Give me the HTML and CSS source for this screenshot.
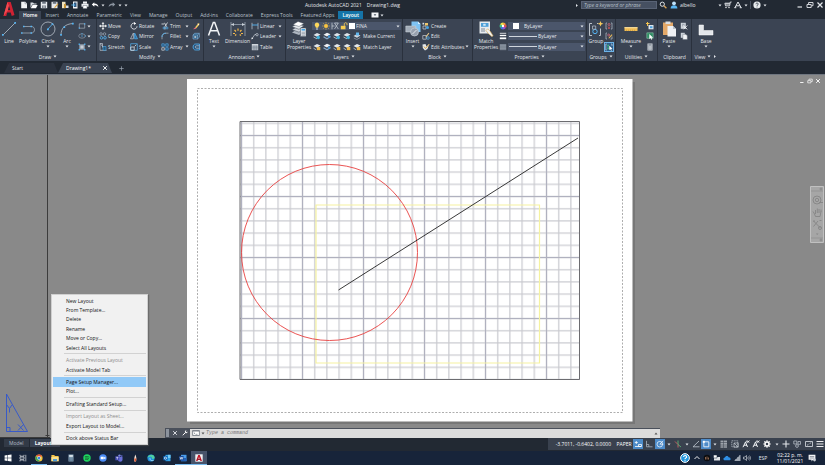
FILE: index.html
```html
<!DOCTYPE html>
<html lang="en">
<head>
<meta charset="utf-8">
<title>Autodesk AutoCAD 2021 - Drawing1.dwg</title>
<link rel="stylesheet" href="styles.css">
</head>
<body>
<svg class="defs" aria-hidden="true">
  <!-- generic -->
  <symbol id="caret" viewBox="0 0 4 3"><path d="M.5.5h3L2 2.400z" fill="currentColor"/></symbol>
  <symbol id="new" viewBox="0 0 8 8"><path d="M1.200.8h4L7 2.500v4.700H1.200z" fill="#f2f4f6"/><path d="M5 .8v2h2" fill="none" stroke="#89919c" stroke-width=".6"/></symbol>
  <symbol id="open" viewBox="0 0 8 8"><path d="M.5 1.500h2.500l1 1h2.500v1H2.200L.5 7z" fill="#d9dde2"/><path d="M2.500 4h5.200L6 7.200H.8z" fill="#fff"/></symbol>
  <symbol id="save" viewBox="0 0 8 8"><path d="M.8.8h6.400v6.400H.8z" fill="#e6e9ed"/><path d="M2.200.8h3.600v2H2.200zM2 4.500h4v2.700H2z" fill="#6b7480"/><path d="M2.700 5.200h2.600M2.700 6.300h2.600" stroke="#fff" stroke-width=".5"/></symbol>
  <symbol id="saveas" viewBox="0 0 8 8"><path d="M.5.8h6v6.400h-6z" fill="#e6e9ed"/><path d="M1.800.8h3.500v2H1.800z" fill="#6b7480"/><path d="M7.500 3 4.300 6.700l-1 .4.200-1.100L6.600 2.400z" fill="#e0a63e"/></symbol>
  <symbol id="openweb" viewBox="0 0 8 8"><path d="M1 .8h3.500v6.400H1z" fill="#f1e3bd"/><path d="M3 3h2v4H3z" fill="#c99739"/><path d="M5 4.500h2.500V7H5z" fill="#dde2e8"/></symbol>
  <symbol id="saveweb" viewBox="0 0 8 8"><path d="M2 .5h4.500v7H2z" fill="#f4f5f7"/><path d="M3 1.500h2.500v4.500H3z" fill="#31577d"/><path d="M.3 4h3M2.200 2.700 3.700 4 2.200 5.300" fill="none" stroke="#57b3ee" stroke-width=".9"/></symbol>
  <symbol id="print" viewBox="0 0 8 8"><path d="M2 .5h4v2H2zM.5 2.800h7v3h-7z" fill="#eef0f3"/><path d="M2 4.500h4v3H2z" fill="#fff" stroke="#69727e" stroke-width=".5"/></symbol>
  <symbol id="undo" viewBox="0 0 8 8"><path d="M3.300 1.200.8 3.500l2.500 2.300V4.300c2 0 3.200.4 4 2 0-2.500-1.300-3.600-4-3.700z" fill="#fff"/></symbol>
  <symbol id="redo" viewBox="0 0 8 8"><path d="M4.700 1.200 7.200 3.500 4.700 5.800V4.300c-2 0-3.200.4-4 2 0-2.500 1.300-3.600 4-3.700z" fill="#8b94a0"/></symbol>
  <symbol id="search" viewBox="0 0 8 8"><circle cx="3.300" cy="3.200" r="2.100" fill="none" stroke="#dfe3e8"/><path d="m4.900 4.800 2.500 2.500" stroke="#d8a35a" stroke-width="1.300"/></symbol>
  <symbol id="user" viewBox="0 0 8 8"><circle cx="4" cy="2.300" r="1.900" fill="#bfe2fb"/><path d="M.6 7.400C.8 5 2 4.300 4 4.300s3.200.7 3.400 3.100z" fill="#5ab6f2"/></symbol>
  <symbol id="cart" viewBox="0 0 8 8"><path d="M7.600 1H6.300L5.600 4.800H1.500L.9 2.200H6" fill="none" stroke="#e6e9ed" stroke-width=".9"/><path d="M1.500 3h4" stroke="#e6e9ed"/><circle cx="2" cy="6.500" r=".7" fill="#fff"/><circle cx="5" cy="6.500" r=".7" fill="#fff"/></symbol>
  <symbol id="appstore" viewBox="0 0 8 8"><path d="M1 6.500 4 1l3 5.500M2 4.800h4M.3 6.700h2M5.700 6.700h2" fill="none" stroke="#e6e9ed"/></symbol>
  <symbol id="help" viewBox="0 0 8 8"><circle cx="4" cy="4" r="3.600" fill="#e9ecef"/><path d="M2.900 3.200c0-1.600 2.300-1.500 2.300-.1 0 .8-1.200.8-1.200 1.800M4 5.600v.8" fill="none" stroke="#2a3340" stroke-width=".8"/></symbol>
  <symbol id="min" viewBox="0 0 8 8"><path d="M1.500 6h4.500" stroke="currentColor" stroke-width="1.200"/></symbol>
  <symbol id="restore" viewBox="0 0 8 8"><path d="M1 3.500h4.200v3H1zM2.600 3.200V1.500H7v3.200H5.500" fill="none" stroke="currentColor" stroke-width=".9"/></symbol>
  <symbol id="close" viewBox="0 0 8 8"><path d="m1.500 1.500 5 5m0-5-5 5" stroke="currentColor" stroke-width="1.200"/></symbol>
  <symbol id="display" viewBox="0 0 8 8"><path d="M.5 1.500h7v5h-7z" fill="#f3f5f7"/><path d="M2.700 3.200h2.600L4 5z" fill="#4a5361"/></symbol>
  <!-- draw -->
  <symbol id="line" viewBox="0 0 16 16"><path d="m2 14 12-12" stroke="#c9d0d8" stroke-width=".7"/><path d="M1 13h1.700v1.700H1zM13.300 1H15v1.700h-1.700z" fill="#55b4f3"/></symbol>
  <symbol id="polyline" viewBox="0 0 16 16"><path d="M3 5.500h8.500c4 0 4 6.500 0 6.500H2" fill="none" stroke="#aeb7c2" stroke-width=".7"/><path d="M3 4.700h1.500v1.500H3zM10.500 4.700H12v1.500h-1.500zM10.500 11.200H12v1.500h-1.500zM1 11.200h1.500v1.500H1z" fill="#55b4f3"/></symbol>
  <symbol id="circle" viewBox="0 0 16 16"><circle cx="8" cy="8" r="7" fill="none" stroke="#c9d0d8" stroke-width=".7"/><path d="m8 8 4.500-5" stroke="#55b4f3" stroke-width=".8"/><path d="M7 7.500h1.800v1.800H7zM11.700 2.200h1.600v1.600h-1.600z" fill="#55b4f3"/></symbol>
  <symbol id="arc" viewBox="0 0 16 16"><path d="M2 14C2 7 6 3 14 2.500" fill="none" stroke="#c9d0d8" stroke-width=".7"/><path d="M1.200 13h1.700v1.700H1.200zM4.500 5.200h1.700v1.700H4.500zM13 1.700h1.700v1.700H13z" fill="#55b4f3"/></symbol>
  <symbol id="rect" viewBox="0 0 8 8"><path d="M1.300 1.800h5.400v4.400H1.300z" fill="none" stroke="#b5bdc8" stroke-width=".6"/><path d="M.7 5.600h1.200v1.200H.7zM6.100 1.200h1.200v1.200H6.100z" fill="#55b4f3"/></symbol>
  <symbol id="ellipse" viewBox="0 0 8 8"><ellipse cx="4" cy="4" rx="3.300" ry="2.200" fill="none" stroke="#9aa6b4" stroke-width=".6"/><path d="M3.400 3.400h1.200v1.200H3.400zM3.500 1.200h1v1h-1zM6.800 3.500h1v1h-1z" fill="#55b4f3"/></symbol>
  <symbol id="hatch" viewBox="0 0 8 8"><path d="M1.200 1.200h5.600v5.600H1.200z" fill="#8c98a8"/><path d="M2.500 2.500h3v3h-3z" fill="#c7ced7"/><path d="M.6.6h1.300v1.300H.6zM6.100.6h1.300v1.300H6.100zM.6 6.100h1.300v1.300H.6zM6.100 6.100h1.300v1.300H6.100z" fill="#55b4f3"/></symbol>
  <!-- modify -->
  <symbol id="move" viewBox="0 0 8 8"><path d="M4 0 5.400 1.700H2.600zM4 8 2.600 6.300h2.800zM0 4l1.700-1.400v2.800zM8 4 6.300 5.400V2.600zM3.600 1.500h.8v2.100h2.100v.8H4.400v2.100h-.8V4.400H1.500v-.8h2.100z" fill="#fff"/></symbol>
  <symbol id="rotate" viewBox="0 0 8 8"><path d="M5.800 1.700A3 3 0 1 0 7 4.300" fill="none" stroke="#e3e7eb" stroke-width=".9"/><path d="M4 0v3L6 1.500z" fill="#fff"/></symbol>
  <symbol id="trim" viewBox="0 0 8 8"><path d="M.5 2h2.700M3.500.8l2 4M6.500.5 4 4.500v3" fill="none" stroke="#e3e7eb" stroke-width=".8"/><circle cx="3" cy="6" r="1" fill="none" stroke="#55b4f3" stroke-width=".7"/><circle cx="6" cy="6" r="1" fill="none" stroke="#55b4f3" stroke-width=".7"/></symbol>
  <symbol id="erase" viewBox="0 0 8 8"><path d="M3 5.500 6.500 1l1.200 1L4.300 6.300z" fill="#f5c95d"/><path d="M3 5.500 1 7.300l2.500-.3.900-.8z" fill="#e56a7a"/><path d="M5.700 2 6.900 3" stroke="#fff"/></symbol>
  <symbol id="copy" viewBox="0 0 8 8"><circle cx="2" cy="2" r="1.300" fill="none" stroke="#9fabb9" stroke-width=".7"/><circle cx="5.500" cy="2" r="1.300" fill="none" stroke="#9fabb9" stroke-width=".7"/><circle cx="2.500" cy="5.800" r="1.300" fill="none" stroke="#55b4f3" stroke-width=".8"/><circle cx="6" cy="5.800" r="1.300" fill="none" stroke="#55b4f3" stroke-width=".8"/></symbol>
  <symbol id="mirror" viewBox="0 0 8 8"><path d="M3.400 1v5.800H.5z" fill="none" stroke="#c1c9d2" stroke-width=".7"/><path d="M4.600 1v5.800h2.900z" fill="#2b6ea5" stroke="#55b4f3" stroke-width=".7"/></symbol>
  <symbol id="fillet" viewBox="0 0 8 8"><path d="M1 7.300V5c0-2.500 1.500-3.800 4-3.800h2.500" fill="none" stroke="#aeb7c2" stroke-width=".7"/><path d="M1 5c0-2.500 1.500-3.800 4-3.800" fill="none" stroke="#55b4f3" stroke-width=".8"/></symbol>
  <symbol id="explode" viewBox="0 0 8 8"><path d="M1 3h4.500v4H1zM1 3l1.500-1.700h4.800L5.500 3M7.300 1.300v4L5.500 7" fill="#24597f" stroke="#8dbbe0" stroke-width=".6"/><path d="M2.300 4.200h2v1.600h-2z" fill="#c9d0d8"/></symbol>
  <symbol id="stretch" viewBox="0 0 8 8"><path d="M1 .5v6.800h6.300zM1 .5h2.500v4" fill="none" stroke="#c1c9d2" stroke-width=".7"/><path d="M4 3.500h3v3.800H4z" fill="#24597f" stroke="#55b4f3" stroke-width=".5"/></symbol>
  <symbol id="scale" viewBox="0 0 8 8"><path d="M.7.7h6.600v6.600H.7z" fill="none" stroke="#55b4f3" stroke-width=".7"/><path d="M.7 4h3.500v3.300H.7z" fill="none" stroke="#d8dde3" stroke-width=".8"/><path d="m4.500 3.500 1.800-1.800" stroke="#fff" stroke-width=".7"/></symbol>
  <symbol id="array" viewBox="0 0 8 8"><path d="M.8.8h2.500v2.500H.8zM4.700.8h2.500v2.500H4.700zM4.700 4.700h2.500v2.500H4.700z" fill="#28537a" stroke="#55b4f3" stroke-width=".6"/><path d="M.8 4.700h2.500v2.500H.8z" fill="none" stroke="#d5dae0" stroke-width=".7"/></symbol>
  <symbol id="offset" viewBox="0 0 8 8"><path d="M7.500 1H3.500C.3 1 .3 7 3.500 7h4z" fill="#28537a" stroke="#55b4f3" stroke-width=".8"/><path d="M7.500 2.800H4.500c-1.700 0-1.700 2.400 0 2.400h3" fill="none" stroke="#b5bdc8" stroke-width=".8"/></symbol>
  <!-- annotation -->
  <symbol id="text" viewBox="0 0 16 16"><path d="M2.500 14.500 7.300 1.500h1.400l4.800 13M4.500 9.800h7" fill="none" stroke="#f2f4f6" stroke-width="1.500"/></symbol>
  <symbol id="dimension" viewBox="0 0 16 16"><path d="M1 1v14M15 1v14M1 3.500h14" stroke="#a7b1bd" stroke-width=".7"/><path d="m1 3.500 3-1.500v3zM15 3.500 12 2v3z" fill="#c9d0d8"/><path d="M4.500 9 6 10.500M8 7.500v2.300M11.500 9 10 10.500M3 12.500h2M11 12.500h2M5 14.500l1.300-1M11 14.500l-1.300-1" stroke="#f3b94c" stroke-width="1.200"/></symbol>
  <symbol id="linear" viewBox="0 0 8 8"><path d="M1 .8v6.500M7 .8v6.500" stroke="#c9d0d8" stroke-width=".7"/><path d="M1 3h6" stroke="#55b4f3" stroke-width=".9"/></symbol>
  <symbol id="leader" viewBox="0 0 8 8"><path d="m.8 7 3-4.500H5" fill="none" stroke="#c9d0d8" stroke-width=".7"/><path d="m.5 7.500.3-2.200 1.400.9z" fill="#fff"/><circle cx="6" cy="2.700" r="1.200" fill="none" stroke="#c9d0d8" stroke-width=".7"/></symbol>
  <symbol id="table" viewBox="0 0 8 8"><path d="M.8 1h6.400v6.200H.8z" fill="#cfd5dc"/><path d="M.8 3.200h6.400M.8 4.700h6.400M.8 6h6.400M3 2.500v4.700M5.200 2.500v4.700" stroke="#5b6675" stroke-width=".5"/></symbol>
  <!-- layers -->
  <symbol id="layers" viewBox="0 0 16 16"><path d="m1 11.500 5-3 7 2-5 3.500z" fill="#aeb6c0"/><path d="m1 8.700 5-3 7 2-5 3.500z" fill="#cdd3da" stroke="#3b4453" stroke-width=".5"/><path d="m1 5.800 5-3 7 2-5 3.500z" fill="#e3e7eb" stroke="#3b4453" stroke-width=".5"/><path d="m2 3.500 5-3 6 2-5 3z" fill="#fff" stroke="#3b4453" stroke-width=".4"/><path d="M9.500 7H15v8.500H9.500z" fill="#e8ebee" stroke="#4d5867" stroke-width=".5"/><path d="M10.500 8h3.500v1.600h-3.500z" fill="#43a3e4"/><path d="M10.500 11.200H14M10.500 12.700H14M10.500 14.200H14" stroke="#6d7784" stroke-width=".6"/></symbol>
  <symbol id="bulb" viewBox="0 0 8 8"><path d="M4 .5a2.400 2.400 0 0 1 1.200 4.400v.8H2.800v-.8A2.400 2.400 0 0 1 4 .5z" fill="#fbd75b"/><path d="M3 6.500h2v1H3z" fill="#d5dae0"/></symbol>
  <symbol id="sun" viewBox="0 0 8 8"><circle cx="4" cy="4" r="2" fill="#f9c440"/><path d="M4 .3v1.200M4 6.500v1.200M.3 4h1.200M6.500 4h1.200M1.400 1.400l.8.800M5.800 5.800l.8.800M6.600 1.400l-.8.800M1.400 6.600l.8-.8" stroke="#f9c440" stroke-width=".7"/></symbol>
  <symbol id="vp" viewBox="0 0 8 8"><path d="M1 .7v6.600M1 4h2.500M3.500 1l3.800 6M7.300 1 3.500 7M3.500 1h3.800" fill="none" stroke="#cfd5dc" stroke-width=".7"/></symbol>
  <symbol id="unlock" viewBox="0 0 8 8"><path d="M.8 3.800h4.700v3.500H.8z" fill="#f8cc50"/><path d="M4.300 3.800V2.200c0-2 2.700-2 2.700 0v1" fill="none" stroke="#f8cc50" stroke-width=".9"/></symbol>
  <symbol id="lay1" viewBox="0 0 8 8"><path d="m.5 3 3.500-2 3.500 1.500L4 4.800z" fill="#dfe3e8"/><path d="m.5 5 3.500 1.800" stroke="#aeb6c0"/><circle cx="5.300" cy="5.500" r="1.700" fill="#3fb0d8"/></symbol>
  <symbol id="lay2" viewBox="0 0 8 8"><path d="m.5 2.800 3.500-2 3.500 1.500L4 4.600z" fill="#eef0f3"/><path d="M.5 4.700 4 6.800l3.500-2.300" fill="none" stroke="#88a9c8" stroke-width="1.200"/><path d="M5 3.500h2.200v2H5z" fill="#378fd0"/></symbol>
  <symbol id="lay3" viewBox="0 0 8 8"><path d="m.5 3 3.500-2 3.500 1.500L4 4.800z" fill="#e3e7eb"/><path d="m.5 5.200 2.500 1.500" stroke="#aeb6c0"/><path d="M3.800 4h3.500v3.200H3.800z" fill="#e7b750"/></symbol>
  <symbol id="lay4" viewBox="0 0 8 8"><path d="m.5 4 3.500-2 3.500 1.500L4 5.800z" fill="#cfd5dc"/><path d="m.8 6 3 1.500 3.500-2" fill="none" stroke="#7f8b9a"/><path d="M3 .5h3v3H3z" fill="#61b7ef"/></symbol>
  <!-- block -->
  <symbol id="insert" viewBox="0 0 16 16"><path d="M6.500.5H13l2.500 2.500v8h-9z" fill="#7fc3f3"/><path d="M13 .5V3h2.500" fill="#d5ecfb"/><path d="M.8 5h10v6h-10z" fill="#a3adb9" stroke="#d2d8df" stroke-width=".5"/><circle cx="9.500" cy="11" r="4" fill="#97a1ae" stroke="#d2d8df" stroke-width=".6"/><path d="m7.500 13 4-4" stroke="#e2e6ea"/></symbol>
  <symbol id="create" viewBox="0 0 8 8"><path d="M1 4h3v3H1z" fill="none" stroke="#c9d0d8" stroke-width=".7"/><circle cx="5.500" cy="5.500" r="1.500" fill="#43a3e4"/><path d="M3 1h3v2.500H3z" fill="#eec66a"/><path d="M.5.8h1.700v1.700H.5z" fill="#dfe3e8"/></symbol>
  <symbol id="edit" viewBox="0 0 8 8"><path d="M.8 3.500h3.500v3.700H.8z" fill="none" stroke="#c9d0d8" stroke-width=".7"/><path d="M7.300 1.500 4.500 5l-1 .5.300-1.200L6.500.8z" fill="#e8c98a"/><circle cx="6" cy="6" r="1.300" fill="none" stroke="#55b4f3" stroke-width=".7"/></symbol>
  <symbol id="editattr" viewBox="0 0 8 8"><path d="M.5 1.500 3.500 1l1 2.500L7.300.7 5.500 6 3 7.500.8 5z" fill="#e3e7eb"/><path d="m2 3.500 1.500 2 3.700-4.300" fill="none" stroke="#e0a63e"/></symbol>
  <!-- properties -->
  <symbol id="matchprop" viewBox="0 0 16 16"><path d="M1.500.5H12v12H1.500z" fill="#e7eaee"/><path d="M3 2h7.500v3.800H3z" fill="#4d9fd8"/><path d="M5.200 2.800h2.500v2H5.200z" fill="#cfe7f8"/><path d="M3 8h4M3 10h4" stroke="#7d8896"/><path d="m8 9.500 1.700-1.700 2.800 2.900 2.500 4-1 1-3.500-3z" fill="#f2f3f5" stroke="#d8a84a" stroke-width=".6"/></symbol>
  <symbol id="wheel" viewBox="0 0 8 8"><path d="M4 4V.5A3.500 3.500 0 0 1 7 2.300z" fill="#f6a63a"/><path d="m4 4 3-1.700a3.500 3.500 0 0 1 0 3.500z" fill="#e94f4f"/><path d="m4 4 3 1.700A3.500 3.500 0 0 1 4 7.500z" fill="#9a4fd0"/><path d="M4 4v3.500A3.500 3.500 0 0 1 1 5.700z" fill="#3a78e0"/><path d="M4 4 1 5.700a3.500 3.500 0 0 1 0-3.400z" fill="#3fc38a"/><path d="M4 4 1 2.300A3.500 3.500 0 0 1 4 .5z" fill="#e9e04a"/><circle cx="4" cy="4" r="1.200" fill="#fff"/></symbol>
  <symbol id="weights" viewBox="0 0 8 8"><path d="M.8 1.300h6.400" stroke="#fff" stroke-width=".8"/><path d="M.8 3.500h6.400" stroke="#fff" stroke-width="1.300"/><path d="M.8 6.300h6.400" stroke="#fff" stroke-width="1.800"/></symbol>
  <symbol id="types" viewBox="0 0 8 8"><path d="M.8 1h6.400v6.200H.8z" fill="#6d7886"/><path d="M.8 2.200h6.400M.8 4h6.400M.8 5.800h6.400" stroke="#a9b2be" stroke-width=".6"/></symbol>
  <!-- groups, utilities, clipboard, view -->
  <symbol id="group" viewBox="0 0 16 16"><path d="M4 2.500H1.500v12H4M9 2.500h1M11 14.500h1.500v-7" fill="none" stroke="#c9d0d8" stroke-width=".9"/><circle cx="7" cy="10.500" r="2.200" fill="none" stroke="#55b4f3"/><path d="M4.500 5h3.200v3.200H4.500z" fill="none" stroke="#aeb7c2" stroke-width=".8"/><path d="m12.500 0 .8 2 2.200.8-2.200.8-.8 2-.8-2-2.200-.8 2.200-.8z" fill="#f7cb5c"/></symbol>
  <symbol id="ungroup" viewBox="0 0 8 8"><path d="M2 1H1v6h1M6 1h1v6H6" fill="none" stroke="#b5bdc8" stroke-width=".7"/><circle cx="4" cy="2.500" r="1" fill="none" stroke="#e56a7a" stroke-width=".7"/><path d="m3 4.500 2 2.500m0-2.500L3 7" stroke="#e55" stroke-width=".7"/></symbol>
  <symbol id="groupedit" viewBox="0 0 8 8"><path d="M2 1H1v6h1M5.500 7H7V4.500" fill="none" stroke="#b5bdc8" stroke-width=".7"/><circle cx="3.700" cy="3" r="1" fill="none" stroke="#e56a7a" stroke-width=".7"/><path d="M7.500 3 4.500 6.300l-1 .3.300-1L6.700 2.300z" fill="#e8b95a"/></symbol>
  <symbol id="groupsel" viewBox="0 0 8 8"><path d="M1.800 1H.8v6h1M6 1h1v2" fill="none" stroke="#c9d0d8" stroke-width=".7"/><path d="M2.300 1.800h1.700v1.700H2.300zM2.300 4.500h1.700v1.700H2.300z" fill="#45b37a"/><path d="m4.300 2.700 3.200 3-1.400.2.700 1.500-.7.300-.7-1.500-1.100.9z" fill="#fff"/></symbol>
  <symbol id="measure" viewBox="0 0 16 16"><path d="M1.500 6.200h13v3.800h-13z" fill="#f0bd55"/><path d="M1.500 6.700h13" stroke="#fbe2a4"/><path d="M3.500 8.700V10M5.500 8.700V10M7.500 8.700V10M9.500 8.700V10M11.500 8.700V10" stroke="#b98a3a" stroke-width=".5"/></symbol>
  <symbol id="quick" viewBox="0 0 8 8"><path d="M2.500 3h5v4.300h-5z" fill="#dfe7ee"/><path d="M1.500 0v4M0 1.500h3.500" stroke="#f3c24e"/><path d="M4 4.200h2.500v2H4z" fill="#4a9fdc"/></symbol>
  <symbol id="qselect" viewBox="0 0 8 8"><path d="M.8.800h6.400v5.500H.8z" fill="#2e8c63" stroke="#9fd6bb" stroke-width=".5"/><path d="m3.300 2 3.800 3.700-1.600.1.700 1.600-.8.300-.7-1.600-1.400 1z" fill="#fff"/></symbol>
  <symbol id="calc" viewBox="0 0 8 8"><path d="M1.500.5h5v7h-5z" fill="#d5d9de"/><path d="M2.300 1.300h3.400v1.300H2.300z" fill="#78838f"/><path d="M2.300 3.800h3.400M2.300 5.100h3.400M2.300 6.400h3.400" stroke="#5f6a77" stroke-width=".7" stroke-dasharray=".8 .5"/></symbol>
  <symbol id="paste" viewBox="0 0 16 16"><path d="M2 1.500h10v12.500H2z" fill="#e2a869"/><path d="M4.500.5h5V3h-5z" fill="#d8dde3"/><path d="M6.500 5H12l3 3v7.500H6.500z" fill="#eef0f3"/><path d="M12 5v3h3" fill="#b9c1cb"/></symbol>
  <symbol id="cut" viewBox="0 0 8 8"><path d="M.8.800h5v6h-5z" fill="#cfd5dc"/><path d="M2 2.300h2.500M2 3.800h2.500" stroke="#6d7784" stroke-width=".6"/><path d="m3 3.500 4.300 3.800M7.300 3.500 3.500 7.300" stroke="#fff" stroke-width=".8"/></symbol>
  <symbol id="pages" viewBox="0 0 8 8"><path d="M.8.800h4v5h-4z" fill="#cfd5dc"/><path d="M2.800 2.300h3l1.500 1.500v3.700H2.800z" fill="#f2f4f6" stroke="#59636f" stroke-width=".4"/></symbol>
  <symbol id="base" viewBox="0 0 16 16"><path d="M1 4h4.500v5.500H15V14H1z" fill="#e3e6ea" stroke="#fff" stroke-width=".5"/></symbol>
  <!-- status bar -->
  <symbol id="dyn" viewBox="0 0 8 8"><path d="M.8 2.500h3M2.300 1v3M1 6.500h6M4.500 4.500h3v2h-3z" fill="none" stroke="#fff" stroke-width=".8"/></symbol>
  <symbol id="ortho" viewBox="0 0 8 8"><path d="M1.500.8v6h6M1.500 4.500h2.300v2.300" fill="none" stroke="#aab3be" stroke-width=".8"/></symbol>
  <symbol id="polar" viewBox="0 0 8 8"><circle cx="3.800" cy="4.200" r="2.800" fill="none" stroke="#fff" stroke-width=".7"/><path d="M3.800 4.200 7.200.8M3.800 4.200h3.500" stroke="#fff" stroke-width=".7"/></symbol>
  <symbol id="iso" viewBox="0 0 8 8"><path d="m1 1.500 3 3v3" fill="none" stroke="#e06565" stroke-width=".8"/><path d="M4 .5v4l3 2.500" fill="none" stroke="#5fbf7a" stroke-width=".8"/></symbol>
  <symbol id="otrack" viewBox="0 0 8 8"><path d="M7 1 1 6.800h6.500" fill="none" stroke="#c3cad3" stroke-width=".8"/></symbol>
  <symbol id="osnap" viewBox="0 0 8 8"><path d="M1.800 1.800h5v5h-5z" fill="none" stroke="#fff" stroke-width=".8"/><path d="M.8.800h2v2h-2z" fill="#fff"/></symbol>
  <symbol id="lwt" viewBox="0 0 8 8"><path d="M.5 1.200h7M.5 3.200h7M.5 5h7M.5 7h7" stroke="#dde1e6" stroke-width=".9" stroke-dasharray="3 .5"/></symbol>
  <symbol id="cycle" viewBox="0 0 8 8"><path d="M.8.800h6v6h-6z" fill="none" stroke="#c3cad3" stroke-width=".7" stroke-dasharray="1.200 .6"/><path d="M3 3h4.200v4.200H3zM3 3l4 4" fill="none" stroke="#c3cad3" stroke-width=".7"/></symbol>
  <symbol id="anno" viewBox="0 0 8 8"><path d="M1 7.200 3.500 2l2 5M2 5.200h3M5 .8l2.300 1.500M7.300.5 5 2.800M3.500 2 5 .8" fill="none" stroke="#f2f4f6" stroke-width="1"/></symbol>
  <symbol id="gear" viewBox="0 0 8 8"><circle cx="4" cy="4" r="2" fill="none" stroke="#fff" stroke-width="1.500"/><path d="M4 .3v1.400M4 6.300v1.400M.3 4h1.400M6.300 4h1.400M1.400 1.400l1 1M5.600 5.600l1 1M6.600 1.400l-1 1M1.400 6.600l1-1" stroke="#fff" stroke-width="1.200"/></symbol>
  <symbol id="plus" viewBox="0 0 8 8"><path d="M4 .5v7M.5 4h7" stroke="currentColor" stroke-width="1.100"/></symbol>
  <symbol id="isolate" viewBox="0 0 8 8"><path d="M.8 1h3v3h-3zM5 1.500h2.500v2.800H5z" fill="none" stroke="#c3cad3" stroke-width=".7"/><circle cx="4" cy="6" r="1.400" fill="none" stroke="#c3cad3" stroke-width=".7"/></symbol>
  <symbol id="clean" viewBox="0 0 8 8"><path d="M.5 1.500h7v5h-7z" fill="none" stroke="#dde1e6" stroke-width=".8"/><path d="m4.500 3.700 1.700-1M2 5.300l1.500-1" stroke="#dde1e6" stroke-width=".7"/></symbol>
  <symbol id="menu" viewBox="0 0 8 8"><path d="M.5 1.500h7M.5 4h7M.5 6.500h7" stroke="#fff" stroke-width=".9"/></symbol>
  <symbol id="wrench" viewBox="0 0 8 8"><path d="m1 7 3.500-3.500" stroke="#fff" stroke-width="1.300"/><path d="M7.200 2 5.800 3 5 2.200 6 .8C4.500.5 3.500 1.500 3.900 3l1.200 1.200c1.500.3 2.500-.7 2.100-2.200z" fill="#fff"/></symbol>
  <symbol id="prompt" viewBox="0 0 8 8"><path d="M.6 1.500h6.800v5H.6z" fill="#fff" stroke="#5d6570" stroke-width=".7"/><path d="M.6 2.200h6.800M1.800 3.500l1 .8-1 .8M3.500 5.300h2" fill="none" stroke="#5d6570" stroke-width=".6"/></symbol>
  <!-- taskbar -->
  <symbol id="win" viewBox="0 0 8 8"><path d="m.6 1.500 2.900-.4v2.600H.6zM4 1l3.500-.5v3.200H4zM.6 4.300h2.900v2.600l-2.900-.4zM4 4.300h3.500v3.200L4 7z" fill="#fff"/></symbol>
  <symbol id="taskview" viewBox="0 0 8 8"><path d="M1 .8v1.400h4V.8M1 3h4v2.200H1zM1 7.400V6h4v1.400M6.800.8v6.600" fill="none" stroke="#dfe3e8" stroke-width=".7"/></symbol>
  <symbol id="chrome" viewBox="0 0 8 8"><circle cx="4" cy="4" r="3.600" fill="#f3c63a"/><path d="M.9 2.200A3.600 3.600 0 0 1 7.200 2.400H4z" fill="#e34b3c"/><path d="M.9 2.200A3.600 3.600 0 0 0 3.800 7.600L5.200 5z" fill="#3da556"/><circle cx="4" cy="4" r="1.700" fill="#fff"/><circle cx="4" cy="4" r="1.300" fill="#3f82ee"/></symbol>
  <symbol id="folder" viewBox="0 0 8 8"><path d="M.4 1h2.800l.8.900h3.600v5.300H.4z" fill="#f6c54c"/><path d="M.4 3h7.200v4.200H.4z" fill="#fbe08c"/><path d="M2 5h4v2.200H2z" fill="#4c9bd9"/></symbol>
  <symbol id="wincalc" viewBox="0 0 8 8"><path d="M1.500.5h5v7h-5z" fill="#8fa8bd"/><path d="M2.200 1.200h3.600v1.500H2.200z" fill="#e8eef3"/><path d="M2.200 4h3.600M2.200 5.300h3.600M2.200 6.600h3.600" stroke="#2c4a66" stroke-width=".7" stroke-dasharray=".9 .4"/></symbol>
  <symbol id="spotify" viewBox="0 0 8 8"><circle cx="4" cy="4" r="3.700" fill="#1ed760"/><path d="M1.800 2.800c1.500-.5 3.300-.3 4.600.4M2 4.200c1.300-.4 2.800-.2 3.900.4M2.200 5.500c1-.3 2.200-.2 3.200.4" fill="none" stroke="#12331f" stroke-width=".6"/></symbol>
  <symbol id="zoomapp" viewBox="0 0 8 8"><circle cx="4" cy="4" r="3.700" fill="#4a8cf7"/><path d="M1.700 2.800h3v2.500h-3zM5 3.600l1.400-.9v2.600L5 4.500z" fill="#fff"/></symbol>
  <symbol id="teams" viewBox="0 0 8 8"><circle cx="4.500" cy="1.600" r="1.200" fill="#8087e8"/><circle cx="6.800" cy="2.100" r=".8" fill="#6a70d8"/><path d="M3 3h4.500v2.500c0 1.700-1 2.200-2.200 2.200S3 7 3 5.500z" fill="#6a70d8"/><path d="M.3 2.300h4v4h-4z" fill="#4148b0"/><path d="M1.200 3.300h2.200M2.300 3.300v2.200" stroke="#fff" stroke-width=".6"/></symbol>
  <symbol id="flame" viewBox="0 0 8 8"><path d="M4.300.5C5.500 3 5.700 5 5 7.500H3.300C2.500 5.500 3.700 3 4.300.5z" fill="#f1e4da"/><path d="M3.200 4.500h2.200L5 7.500H3.400z" fill="#d8542f"/></symbol>
  <symbol id="edge" viewBox="0 0 8 8"><circle cx="4" cy="4" r="3.600" fill="#1f8fdc"/><path d="M.5 3.800C1 .2 6.800-.5 7.600 3.300c.2 1.500-1.500 2-2.600 1.500C5.500 3 3 1.800.5 3.800z" fill="#4fd0a0"/><path d="M3 3.800c-.6 2 1.200 3.500 3.500 2.700" fill="none" stroke="#bdeaf8" stroke-width=".7"/></symbol>
  <symbol id="outlook" viewBox="0 0 8 8"><path d="M2.500.8h5v6.400h-5z" fill="#35a5ea"/><path d="M5 .8h2.500V4H5z" fill="#76cdf8"/><path d="M.3 2h4.300v4.300H.3z" fill="#0b62b5"/><circle cx="2.450" cy="4.150" r="1.100" fill="none" stroke="#fff" stroke-width=".7"/></symbol>
  <symbol id="word" viewBox="0 0 8 8"><path d="M2 .8h5.500v6.400H2z" fill="#4a9ceb"/><path d="M2 4h5.500v3.200H2z" fill="#2360b5"/><path d="M.3 2h4.300v4.300H.3z" fill="#174a9c"/><path d="m1 3 .7 2.300.7-2 .7 2L3.800 3" fill="none" stroke="#fff" stroke-width=".6"/></symbol>
  <symbol id="acad" viewBox="0 0 8 8"><path d="M.3.3h7.400v7.400H.3z" fill="#f1f1f2"/><path d="M1 7 3.200 1h1.600L7 7H5.400L4 3 2.600 7z" fill="#c3172a"/><path d="M2.500 4.800h3v1.100h-3z" fill="#8d0e1d"/></symbol>
  <symbol id="qhelp" viewBox="0 0 8 8"><circle cx="4" cy="4" r="3.500" fill="#2597dd" stroke="#fff" stroke-width=".8"/><path d="M2.900 3.200c0-1.700 2.400-1.500 2.400-.1 0 .8-1.300.9-1.300 1.900M4 5.700v.8" fill="none" stroke="#fff" stroke-width=".9"/></symbol>
  <symbol id="up" viewBox="0 0 8 8"><path d="m1.500 5 2.500-2.500L6.500 5" fill="none" stroke="#fff" stroke-width=".9"/></symbol>
  <symbol id="tray" viewBox="0 0 8 8"><circle cx="4" cy="4" r="3.300" fill="#0c0d10"/><path d="M2.500 3v2.500M4 2.500v3M5.500 3.500v2" stroke="#c08a6a" stroke-width=".7"/></symbol>
  <symbol id="battery" viewBox="0 0 8 8"><path d="M1 3h6v3.500H1z" fill="#dfe3e8"/><path d="M.5 1h3.500v3H.5z" fill="#f8f9fa" stroke="#17243a" stroke-width=".5"/></symbol>
  <symbol id="cloud" viewBox="0 0 8 8"><path d="M2 6.300c-2 0-2-2.600-.2-2.700C2.500 1.500 5 1.500 5.600 3.200 8 3.100 8.200 6.300 6.300 6.300z" fill="#2f8fe6"/></symbol>
  <symbol id="wifi" viewBox="0 0 8 8"><path d="M7 1v6H1z" fill="#7b8694"/><path d="M7 1v6M5 3v4M3 5v2" stroke="#dfe3e8" stroke-width=".7"/></symbol>
  <symbol id="volume" viewBox="0 0 8 8"><path d="M.5 3h1.300L3.500 1.500v5L1.800 5H.5z" fill="none" stroke="#e6e9ed" stroke-width=".6"/><path d="M4.500 3c.6.6.6 1.400 0 2M5.500 2.200c1 1 1 2.600 0 3.600M6.500 1.500c1.400 1.500 1.400 3.500 0 5" fill="none" stroke="#e6e9ed" stroke-width=".5"/></symbol>
  <symbol id="notif" viewBox="0 0 8 8"><path d="M.6.800h6.800v5H5L3.500 7.400V5.800H.6z" fill="#f4f5f7"/><path d="M1.800 2.500h4.400M1.800 4h4.400" stroke="#55606f" stroke-width=".6"/><circle cx="6.500" cy="6" r="1.400" fill="#c8ced6"/></symbol>
</svg>

<header class="top">
  <button class="logo" aria-label="Application menu"><svg viewBox="0 0 12 16"><path d="M.5 15 4.500 1h3.200l3.800 13-2.800 1-1-3.500H4.200L3.300 15z" fill="#cf2233"/><path d="M4.500 1 6 5l-1.200 4.500L.5 15z" fill="#ef4a50"/><path d="m5 9 1-4 1.200 4z" fill="#222933"/></svg></button>
  <div class="titlebar">
    <nav class="qat" aria-label="Quick access">
      <button aria-label="New"><svg class="i"><use href="#new"/></svg></button>
      <button aria-label="Open"><svg class="i"><use href="#open"/></svg></button>
      <button aria-label="Save"><svg class="i"><use href="#save"/></svg></button>
      <button aria-label="Save as"><svg class="i"><use href="#saveas"/></svg></button>
      <button aria-label="Open from web"><svg class="i"><use href="#openweb"/></svg></button>
      <button aria-label="Save to web"><svg class="i"><use href="#saveweb"/></svg></button>
      <button aria-label="Plot"><svg class="i"><use href="#print"/></svg></button>
      <button aria-label="Undo"><svg class="i"><use href="#undo"/></svg></button>
      <svg class="caret"><use href="#caret"/></svg>
      <button aria-label="Redo"><svg class="i"><use href="#redo"/></svg></button>
      <svg class="caret"><use href="#caret"/></svg>
      <svg class="caret"><use href="#caret"/></svg>
    </nav>
    <h1 class="title"><span>Autodesk AutoCAD 2021</span><span>Drawing1.dwg</span></h1>
    <div class="info">
      <svg class="caret side"><use href="#caret"/></svg>
      <input class="search" type="text" aria-label="Search" placeholder="Type a keyword or phrase">
      <button aria-label="Search"><svg class="i"><use href="#search"/></svg></button>
      <button class="account"><svg class="i"><use href="#user"/></svg>albello</button>
      <svg class="caret"><use href="#caret"/></svg>
      <button aria-label="Cart"><svg class="i"><use href="#cart"/></svg></button>
      <button aria-label="App store"><svg class="i"><use href="#appstore"/></svg></button>
      <svg class="caret"><use href="#caret"/></svg>
      <span class="rule"></span>
      <button aria-label="Help"><svg class="i"><use href="#help"/></svg></button>
      <svg class="caret"><use href="#caret"/></svg>
    </div>
    <div class="winctl">
      <button aria-label="Minimize"><svg class="i"><use href="#min"/></svg></button>
      <button aria-label="Restore"><svg class="i"><use href="#restore"/></svg></button>
      <button aria-label="Close"><svg class="i"><use href="#close"/></svg></button>
    </div>
  </div>
  <nav class="tabs" aria-label="Ribbon tabs">
    <a href="#" class="on">Home</a><a href="#">Insert</a><a href="#">Annotate</a><a href="#">Parametric</a><a href="#">View</a><a href="#">Manage</a><a href="#">Output</a><a href="#">Add-ins</a><a href="#">Collaborate</a><a href="#">Express Tools</a><a href="#">Featured Apps</a><a href="#" class="ctx">Layout</a>
    <button class="tabmenu" aria-label="Ribbon display"><svg class="i"><use href="#display"/></svg><svg class="caret"><use href="#caret"/></svg></button>
  </nav>
</header>

<main class="ribbon">
  <section class="panel draw">
    <div class="tools">
      <button class="big"><svg><use href="#line"/></svg>Line</button>
      <button class="big"><svg><use href="#polyline"/></svg>Polyline</button>
      <button class="big"><svg><use href="#circle"/></svg>Circle<svg class="caret"><use href="#caret"/></svg></button>
      <button class="big"><svg><use href="#arc"/></svg>Arc<svg class="caret"><use href="#caret"/></svg></button>
      <div class="stack">
        <button class="sm" aria-label="Rectangle"><svg class="i"><use href="#rect"/></svg><svg class="caret"><use href="#caret"/></svg></button>
        <button class="sm" aria-label="Ellipse"><svg class="i"><use href="#ellipse"/></svg><svg class="caret"><use href="#caret"/></svg></button>
        <button class="sm" aria-label="Hatch"><svg class="i"><use href="#hatch"/></svg><svg class="caret"><use href="#caret"/></svg></button>
      </div>
    </div>
    <button class="name">Draw<svg class="caret"><use href="#caret"/></svg></button>
  </section>
  <section class="panel modify">
    <div class="tools">
      <div class="stack">
        <button class="sm"><svg class="i"><use href="#move"/></svg>Move</button>
        <button class="sm"><svg class="i"><use href="#copy"/></svg>Copy</button>
        <button class="sm"><svg class="i"><use href="#stretch"/></svg>Stretch</button>
      </div>
      <div class="stack">
        <button class="sm"><svg class="i"><use href="#rotate"/></svg>Rotate</button>
        <button class="sm"><svg class="i"><use href="#mirror"/></svg>Mirror</button>
        <button class="sm"><svg class="i"><use href="#scale"/></svg>Scale</button>
      </div>
      <div class="stack split">
        <button class="sm"><svg class="i"><use href="#trim"/></svg>Trim<svg class="caret"><use href="#caret"/></svg></button>
        <button class="sm"><svg class="i"><use href="#fillet"/></svg>Fillet<svg class="caret"><use href="#caret"/></svg></button>
        <button class="sm"><svg class="i"><use href="#array"/></svg>Array<svg class="caret"><use href="#caret"/></svg></button>
      </div>
      <div class="stack">
        <button class="sm" aria-label="Erase"><svg class="i"><use href="#erase"/></svg></button>
        <button class="sm" aria-label="Explode"><svg class="i"><use href="#explode"/></svg></button>
        <button class="sm" aria-label="Offset"><svg class="i"><use href="#offset"/></svg></button>
      </div>
    </div>
    <button class="name">Modify<svg class="caret"><use href="#caret"/></svg></button>
  </section>
  <section class="panel annotation">
    <div class="tools">
      <button class="big"><svg><use href="#text"/></svg>Text<svg class="caret"><use href="#caret"/></svg></button>
      <button class="big"><svg><use href="#dimension"/></svg>Dimension</button>
      <div class="stack split">
        <button class="sm"><svg class="i"><use href="#linear"/></svg>Linear<svg class="caret"><use href="#caret"/></svg></button>
        <button class="sm"><svg class="i"><use href="#leader"/></svg>Leader<svg class="caret"><use href="#caret"/></svg></button>
        <button class="sm"><svg class="i"><use href="#table"/></svg>Table</button>
      </div>
    </div>
    <button class="name">Annotation<svg class="caret"><use href="#caret"/></svg></button>
  </section>
  <section class="panel layers">
    <div class="tools">
      <button class="big"><svg><use href="#layers"/></svg>Layer Properties</button>
      <div class="stack">
        <div class="combo">
          <svg class="i"><use href="#bulb"/></svg><svg class="i"><use href="#sun"/></svg><svg class="i"><use href="#vp"/></svg><svg class="i"><use href="#unlock"/></svg><span class="swatch"></span>
          <select aria-label="Layer"><option>FINA</option></select>
          <svg class="caret"><use href="#caret"/></svg>
        </div>
        <div class="iconrow">
          <button aria-label="Off"><svg class="i"><use href="#lay1"/></svg></button><button aria-label="Isolate"><svg class="i"><use href="#lay2"/></svg></button><button aria-label="Freeze"><svg class="i"><use href="#lay1"/></svg></button><button aria-label="Lock"><svg class="i"><use href="#lay1"/></svg></button>
          <button class="sm"><svg class="i"><use href="#lay4"/></svg>Make Current</button>
        </div>
        <div class="iconrow">
          <button aria-label="On"><svg class="i"><use href="#lay3"/></svg></button><button aria-label="Unisolate"><svg class="i"><use href="#lay2"/></svg></button><button aria-label="Thaw"><svg class="i"><use href="#lay3"/></svg></button><button aria-label="Unlock"><svg class="i"><use href="#lay3"/></svg></button>
          <button class="sm"><svg class="i"><use href="#lay3"/></svg>Match Layer</button>
        </div>
      </div>
    </div>
    <button class="name">Layers<svg class="caret"><use href="#caret"/></svg></button>
  </section>
  <section class="panel block">
    <div class="tools">
      <button class="big"><svg><use href="#insert"/></svg>Insert<svg class="caret"><use href="#caret"/></svg></button>
      <div class="stack">
        <button class="sm"><svg class="i"><use href="#create"/></svg>Create</button>
        <button class="sm"><svg class="i"><use href="#edit"/></svg>Edit</button>
        <button class="sm"><svg class="i"><use href="#editattr"/></svg>Edit Attributes<svg class="caret"><use href="#caret"/></svg></button>
      </div>
    </div>
    <button class="name">Block<svg class="caret"><use href="#caret"/></svg></button>
  </section>
  <section class="panel props">
    <div class="tools">
      <button class="big"><svg><use href="#matchprop"/></svg>Match Properties</button>
      <div class="stack">
        <div class="proprow"><svg class="i"><use href="#wheel"/></svg><div class="combo"><span class="swatch"></span><select aria-label="Color"><option>ByLayer</option></select><svg class="caret"><use href="#caret"/></svg></div></div>
        <div class="proprow"><svg class="i"><use href="#weights"/></svg><div class="combo"><span class="stroke"></span><select aria-label="Lineweight"><option>ByLayer</option></select><svg class="caret"><use href="#caret"/></svg></div></div>
        <div class="proprow"><svg class="i"><use href="#types"/></svg><div class="combo"><span class="stroke"></span><select aria-label="Linetype"><option>ByLayer</option></select><svg class="caret"><use href="#caret"/></svg></div></div>
      </div>
    </div>
    <button class="name">Properties<svg class="caret"><use href="#caret"/></svg></button>
  </section>
  <section class="panel groups">
    <div class="tools">
      <button class="big"><svg><use href="#group"/></svg>Group</button>
      <div class="stack">
        <button class="sm" aria-label="Ungroup"><svg class="i"><use href="#ungroup"/></svg></button>
        <button class="sm" aria-label="Group edit"><svg class="i"><use href="#groupedit"/></svg></button>
        <button class="sm picked" aria-label="Group selection" aria-pressed="true"><svg class="i"><use href="#groupsel"/></svg></button>
      </div>
    </div>
    <button class="name">Groups<svg class="caret"><use href="#caret"/></svg></button>
  </section>
  <section class="panel utils">
    <div class="tools">
      <button class="big"><svg><use href="#measure"/></svg>Measure<svg class="caret"><use href="#caret"/></svg></button>
      <div class="stack">
        <button class="sm" aria-label="Quick measure"><svg class="i"><use href="#quick"/></svg></button>
        <button class="sm" aria-label="Quick select"><svg class="i"><use href="#qselect"/></svg></button>
        <button class="sm" aria-label="Calculator"><svg class="i"><use href="#calc"/></svg></button>
      </div>
    </div>
    <button class="name">Utilities<svg class="caret"><use href="#caret"/></svg></button>
  </section>
  <section class="panel clip">
    <div class="tools">
      <button class="big"><svg><use href="#paste"/></svg>Paste<svg class="caret"><use href="#caret"/></svg></button>
      <div class="stack">
        <button class="sm" aria-label="Cut"><svg class="i"><use href="#cut"/></svg></button>
        <button class="sm" aria-label="Copy clip"><svg class="i"><use href="#pages"/></svg></button>
      </div>
    </div>
    <button class="name">Clipboard</button>
  </section>
  <section class="panel view">
    <div class="tools">
      <button class="big"><svg><use href="#base"/></svg>Base<svg class="caret"><use href="#caret"/></svg></button>
    </div>
    <button class="name">View<svg class="caret"><use href="#caret"/></svg><svg class="caret side"><use href="#caret"/></svg></button>
  </section>
</main>

<nav class="files" aria-label="Drawings">
  <a href="#">Start</a>
  <a href="#" class="on">Drawing1*<svg class="i"><use href="#close"/></svg></a>
  <button aria-label="New tab"><svg class="i"><use href="#plus"/></svg></button>
</nav>

<section class="canvas" aria-label="Drawing area">
  <svg class="sheet" viewBox="0 75 825 363" preserveAspectRatio="xMinYMin meet">
    <defs>
      <pattern id="minor" x="301.700" y="134.700" width="12.200" height="12.200" patternUnits="userSpaceOnUse"><path d="M.8 0v12.200M0 .8h12.200" stroke="#c9cacf" stroke-width="1.200"/></pattern>
      <pattern id="major" x="302" y="135" width="61" height="61" patternUnits="userSpaceOnUse"><path d="M.5 0v61M0 .5h61" stroke="#b0b1bf" stroke-width="1"/></pattern>
    </defs>
    <path d="M190 82h445v342H190z" fill="#777"/>
    <path d="M187 79h445.500v342.500H187z" fill="#fff"/>
    <path d="M197.500 88.500h425v324h-425z" fill="none" stroke="#999" stroke-dasharray="2 1.500" stroke-width=".8"/>
    <path d="M240 121h340v259H240z" fill="url(#minor)"/>
    <path d="M240 121h340v258H240z" fill="url(#major)"/>
    <path d="M240 121.500h339.500v258H240z" fill="none" stroke="#6c6c70" stroke-width="1"/>
    <path d="M316 205h223.500v158H316z" fill="none" stroke="#f5f2a0" stroke-width="1.200"/>
    <circle cx="329.500" cy="252.500" r="88" fill="none" stroke="#e8413f" stroke-width=".9"/>
    <path d="m338.500 290 239.500-152" stroke="#222" stroke-width=".9"/>
    <path d="M47.500 75v363M0 437.500h50M45.500 435.500h4" stroke="#3c3c3c"/>
    <path d="M6.500 394v37.500H27.500zM6.500 427.500h3.500v4M6.800 405l2.700 3.500L12 405M9.500 408.500v4M18 424.500l5.500 6M23.500 424.500l-5.500 6" fill="none" stroke="#2f55cf" stroke-width=".9"/>
  </svg>
  <div class="docctl">
    <button aria-label="Minimize drawing"><svg class="i"><use href="#min"/></svg></button>
    <button aria-label="Restore drawing"><svg class="i"><use href="#restore"/></svg></button>
    <button aria-label="Close drawing"><svg class="i"><use href="#close"/></svg></button>
  </div>
  <button class="navbar" aria-label="Navigation bar">
    <svg viewBox="0 0 14 57"><path d="M.5.500h13v56H.5z" fill="#a6a6a6" stroke="#c0c0c0"/><path d="M1 5h12M1 52h12" stroke="#949494"/><g fill="none" stroke="#858585" stroke-width=".9"><circle cx="11" cy="3" r="1"/><circle cx="7" cy="14" r="4"/><circle cx="7" cy="14" r="1.700"/><path d="M9 16.500h4M4 27l1.500 3.500h4.500l1-5M4 27l-1-1.500M5.500 28v-4M7.300 27v-4.500M9 27v-4M11 26v-2.500M3.500 35l7 7M8 35l-4.500 5.500M3 35h2M9.500 34.500h2"/><circle cx="10" cy="42" r="1.500"/><circle cx="11" cy="54" r="1"/></g><path d="M6 47.500h2.500L7.200 49z" fill="#858585"/></svg>
  </button>
  <div class="command">
    <span class="grip"></span>
    <button aria-label="Close command line"><svg class="i"><use href="#close"/></svg></button>
    <button aria-label="Customize"><svg class="i"><use href="#wrench"/></svg></button>
    <label><svg class="i"><use href="#prompt"/></svg><svg class="caret"><use href="#caret"/></svg><input type="text" aria-label="Command" placeholder="Type a command"><svg class="caret rise"><use href="#caret"/></svg></label>
  </div>
</section>

<footer class="status">
  <nav class="layouts" aria-label="Layouts"><a href="#">Model</a><a href="#" class="on">Layout1</a></nav>
  <div class="modes">
    <span class="coords">-3.7011, -0.6402, 0.0000</span>
    <button class="paper">PAPER</button>
    <button class="lit" aria-label="Dynamic input"><svg class="i"><use href="#dyn"/></svg></button>
    <button class="wide" aria-label="Ortho"><svg class="i"><use href="#ortho"/></svg></button>
    <button class="lit" aria-label="Polar"><svg class="i"><use href="#polar"/></svg></button>
    <button class="arrow" aria-label="Polar options"><svg class="caret"><use href="#caret"/></svg></button>
    <button aria-label="Isometric"><svg class="i"><use href="#iso"/></svg></button>
    <button class="arrow" aria-label="Isometric options"><svg class="caret"><use href="#caret"/></svg></button>
    <button aria-label="Tracking"><svg class="i"><use href="#otrack"/></svg></button>
    <button class="lit" aria-label="Object snap"><svg class="i"><use href="#osnap"/></svg></button>
    <button class="arrow" aria-label="Snap options"><svg class="caret"><use href="#caret"/></svg></button>
    <button aria-label="Lineweight display"><svg class="i"><use href="#lwt"/></svg></button>
    <button class="wide" aria-label="Selection cycling"><svg class="i"><use href="#cycle"/></svg></button>
    <button aria-label="Annotation visibility"><svg class="i"><use href="#anno"/></svg></button>
    <button aria-label="Annotation autoscale"><svg class="i"><use href="#anno"/></svg></button>
    <button class="wide" aria-label="Workspace"><svg class="i"><use href="#gear"/></svg></button>
    <button class="arrow" aria-label="Workspace options"><svg class="caret"><use href="#caret"/></svg></button>
    <button aria-label="Annotation monitor"><svg class="i"><use href="#plus"/></svg></button>
    <button class="wide" aria-label="Isolate objects"><svg class="i"><use href="#isolate"/></svg></button>
    <button class="wide" aria-label="Clean screen"><svg class="i"><use href="#clean"/></svg></button>
    <button aria-label="Customization"><svg class="i"><use href="#menu"/></svg></button>
  </div>
</footer>

<nav class="taskbar" aria-label="Taskbar">
  <button aria-label="Start"><svg class="i"><use href="#win"/></svg></button>
  <button aria-label="Task view"><svg class="i"><use href="#taskview"/></svg></button>
  <button class="run" aria-label="Chrome"><svg class="i"><use href="#chrome"/></svg></button>
  <button aria-label="Explorer"><svg class="i"><use href="#folder"/></svg></button>
  <button aria-label="Calculator app"><svg class="i"><use href="#wincalc"/></svg></button>
  <button aria-label="Spotify"><svg class="i"><use href="#spotify"/></svg></button>
  <button aria-label="Zoom"><svg class="i"><use href="#zoomapp"/></svg></button>
  <button aria-label="Teams"><svg class="i"><use href="#teams"/></svg></button>
  <button aria-label="Burner"><svg class="i"><use href="#flame"/></svg></button>
  <button aria-label="Edge"><svg class="i"><use href="#edge"/></svg></button>
  <button aria-label="Outlook"><svg class="i"><use href="#outlook"/></svg></button>
  <button class="run" aria-label="Word"><svg class="i"><use href="#word"/></svg></button>
  <button class="run front" aria-label="AutoCAD"><svg class="i"><use href="#acad"/></svg></button>
  <div class="systray">
    <button class="assist" aria-label="Assistant"><svg class="i"><use href="#qhelp"/></svg></button>
    <button aria-label="Hidden icons"><svg class="i"><use href="#up"/></svg></button>
    <button aria-label="Tray app"><svg class="i"><use href="#tray"/></svg></button>
    <button aria-label="Battery"><svg class="i"><use href="#battery"/></svg></button>
    <button aria-label="OneDrive"><svg class="i"><use href="#cloud"/></svg></button>
    <button aria-label="Network"><svg class="i"><use href="#wifi"/></svg></button>
    <button aria-label="Volume"><svg class="i"><use href="#volume"/></svg></button>
    <button class="lang">ESP</button>
    <time class="clock" datetime="2021-01-11T14:22">02:22 p. m.<br>11/01/2021</time>
    <button class="notif" aria-label="Notifications"><svg class="i"><use href="#notif"/></svg></button>
  </div>
</nav>

<div class="menu" role="menu">
  <button role="menuitem">New Layout</button>
  <button role="menuitem">From Template...</button>
  <button role="menuitem">Delete</button>
  <button role="menuitem">Rename</button>
  <button role="menuitem">Move or Copy...</button>
  <button role="menuitem">Select All Layouts</button>
  <hr>
  <button role="menuitem" disabled>Activate Previous Layout</button>
  <button role="menuitem">Activate Model Tab</button>
  <hr>
  <button role="menuitem" class="hot">Page Setup Manager...</button>
  <button role="menuitem">Plot...</button>
  <hr>
  <button role="menuitem">Drafting Standard Setup...</button>
  <hr>
  <button role="menuitem" disabled>Import Layout as Sheet...</button>
  <button role="menuitem">Export Layout to Model...</button>
  <hr>
  <button role="menuitem">Dock above Status Bar</button>
</div>
</body>
</html>
```
FILE: styles.css
```css
* { box-sizing: border-box; }

body {
  margin: 0;
  height: 100vh;
  display: flex;
  flex-direction: column;
  overflow: hidden;
  position: relative;
  background: #222933;
  color: #e4e7eb;
  font: 5px/6px "Open Sans", "Noto Sans", sans-serif;
}

button, input, select {
  font: inherit;
  color: inherit;
  background: none;
  border: 0;
  margin: 0;
  padding: 0;
}
button, a { white-space: nowrap; }
a { color: inherit; text-decoration: none; }
button { display: flex; align-items: center; justify-content: center; }
svg { display: block; flex: none; }
.defs { position: absolute; width: 0; height: 0; }
.i { width: 8px; height: 8px; }
.caret { width: 4px; height: 3px; }
.side { transform: rotate(-90deg); }
.rise { transform: rotate(180deg); }

/* header */
.top {
  display: grid;
  grid-template-columns: 19px 1fr;
  grid-template-rows: 10px 9px;
}
.logo { grid-row: 1 / 3; align-items: flex-start; padding: 1px 2px 0 0; }
.logo svg { width: 12px; height: 16px; }
.titlebar { display: flex; align-items: center; }
.qat {
  display: flex;
  align-items: center;
  justify-content: space-between;
  width: 111px;
  padding: 0 2px 0 1px;
}
.title {
  flex: 1;
  display: flex;
  justify-content: center;
  gap: 5px;
  margin: 0;
  font-size: 5px;
  font-weight: 400;
  white-space: nowrap;
}
.info { display: flex; align-items: center; gap: 2px; width: 210px; padding-right: 18px; }
.search {
  width: 76px;
  height: 8px;
  padding: 0 2px;
  background: #465061;
  border: 1px solid #596375;
}
::placeholder { color: #b9c0ca; font-style: italic; opacity: 1; }
.account { gap: 2px; margin-left: 1px; margin-right: auto; }
.rule { width: 1px; height: 8px; background: #4a5361; }
.winctl { display: flex; width: 40px; justify-content: flex-end; gap: 2px; padding-right: 1px; }

.tabs { display: flex; align-items: flex-end; }
.tabs a { padding: 1px 4px; height: 8px; color: #bcc3cc; }
.tabs .on { background: #3b4453; color: #fff; font-weight: 600; }
.tabs .ctx { background: #1574a8; color: #fff; font-weight: 600; }
.tabmenu { margin-left: 8px; gap: 1px; height: 8px; }

/* ribbon */
.ribbon { display: flex; background: #3b4453; height: 42px; }
.panel { display: flex; flex-direction: column; border-right: 1px solid #2a313d; }
.panel:last-child { border: 0; }
.tools { display: flex; height: 33px; padding-top: 2px; }
.name { height: 9px; gap: 2px; }
.big {
  flex-direction: column;
  justify-content: flex-start;
  width: 18px;
  white-space: normal;
}
.big svg:first-child { width: 16px; height: 16px; margin-bottom: 1px; }
.big .caret { margin-top: 1px; }
.stack { display: grid; grid-template-rows: repeat(3, 1fr); align-items: center; }
.sm { gap: 1px; justify-content: flex-start; }
.split .sm { width: 28px; }
.split .caret { margin-left: auto; }

.draw { width: 97px; }
.draw .big:nth-child(2), .draw .big:nth-child(3) { width: 20px; }
.draw .stack { padding-left: 2px; }
.modify { width: 107px; }
.modify .tools { padding-left: 2px; }
.modify .stack { width: 31px; }
.modify .stack:last-child { width: 10px; }
.annotation { width: 82px; }
.annotation .big { width: 20px; }
.annotation .big:nth-child(2) { width: 27px; }
.annotation .split .sm { width: 31px; }
.layers { width: 117px; }
.layers .big, .props .big { width: 26px; }
.layers .stack { flex: 1; padding-right: 1px; }
.block { width: 70px; }
.block .big { width: 19px; }
.props { width: 114px; }
.props .stack { flex: 1; padding-right: 1px; }
.groups { width: 29px; }
.utils { width: 42px; }
.utils .big { width: 30px; }
.clip { width: 34px; }
.clip .big { width: 22px; }
.view { width: 28px; }
.view .big { width: 28px; }

.combo {
  flex: 1;
  display: flex;
  align-items: center;
  gap: 1px;
  height: 8px;
  padding: 0 1px;
  background: #4b566b;
}
.combo select { flex: 1; min-width: 0; appearance: none; }
.swatch { width: 6px; height: 6px; background: #fff; }
.stroke { width: 28px; height: 1px; background: #cfd5dc; }
.props .swatch { margin: 0 4px; }
.proprow { display: flex; align-items: center; gap: 1px; }
.iconrow { display: flex; gap: 2px; padding-left: 1px; }
.iconrow .sm { gap: 2px; }
.picked { background: #2f5f8c; outline: 1px solid #6db3e8; width: 8px; }

/* drawing tabs */
.files {
  display: flex;
  height: 14px;
  padding: 2px 0 1px 4px;
  border-bottom: 1px solid #6f7680;
}
.files a {
  display: flex;
  align-items: center;
  justify-content: space-between;
  width: 54px;
  padding: 0 4px 0 8px;
  background: #2b323e;
  clip-path: polygon(5px 0, 50px 0, 100% 100%, 0 100%);
}
.files .on { background: #3b4453; color: #fff; }
.files a .i { width: 6px; height: 6px; }
.files button { margin-left: 7px; color: #9ea7b3; }
.files button .i { width: 5px; height: 5px; }

/* drawing area */
.canvas { flex: 1; min-height: 0; position: relative; background: #898989; }
.sheet { width: 100%; height: 100%; }
.docctl {
  position: absolute;
  top: 3px;
  right: 3px;
  display: flex;
  color: #fff;
}
.docctl button { width: 8px; }
.docctl .i { width: 6px; height: 6px; }
.navbar { position: absolute; right: 1px; top: 111px; }
.navbar svg { width: 14px; height: 57px; }
.command {
  position: absolute;
  left: 20%;
  right: 20%;
  bottom: 0;
  height: 10px;
  display: flex;
  align-items: center;
  background: #4a505b;
}
.grip { width: 3px; height: 8px; margin: 0 1px; background: #8b929c; }
.command button { width: 10px; }
.command button .i { width: 6px; height: 6px; }
.command label {
  flex: 1;
  display: flex;
  align-items: center;
  gap: 1px;
  height: 9px;
  padding: 0 2px;
  background: #dcdcdc;
  color: #555;
}
.command input { flex: 1; min-width: 0; font-family: "Liberation Mono", monospace; }
.command ::placeholder { color: #777; }

/* status bar */
.status { display: flex; justify-content: space-between; height: 13px; }
.layouts { display: flex; gap: 1px; padding-left: 4px; height: 9px; align-items: center; }
.layouts a { padding: 1px 5px; background: #323a46; color: #b3bac4; }
.layouts .on { background: #3b4453; color: #fff; font-weight: 700; }
.modes { display: flex; align-items: center; height: 12px; background: #39414e; }
.modes button { width: 10px; height: 10px; }
.modes .wide { width: 12px; }
.modes .arrow { width: 8px; }
.modes .lit { background: #4d8bc9; }
.coords { padding: 0 4px 0 8px; white-space: nowrap; color: #fff; }
.modes .paper { width: 18px; color: #fff; }

/* taskbar */
.taskbar { display: flex; height: 14px; background: #17243a; }
.taskbar > button { width: 16px; border-bottom: 1px solid transparent; }
.taskbar > button:first-child { width: 15px; }
.taskbar > .run { border-color: #76b9ed; }
.taskbar > .front { background: #47536a; }
.systray { display: flex; align-items: center; margin-left: auto; }
.systray button { width: 10px; }
.systray .assist { width: 14px; }
.systray .assist .i { width: 10px; height: 10px; }
.systray .lang { width: 22px; }
.clock { width: 32px; text-align: center; color: #fff; }
.systray .notif { width: 12px; margin-right: 7px; }

/* context menu */
.menu {
  position: absolute;
  left: 51px;
  bottom: 20px;
  width: 97px;
  height: 151px;
  display: flex;
  flex-direction: column;
  padding: 1px;
  background: #f1f1f1;
  border: 1px solid #d0d0d0;
  box-shadow: 1px 1px 1px #5558;
  color: #111;
}
.menu button {
  flex: 3 1 0;
  min-height: 0;
  justify-content: flex-start;
  padding-left: 13px;
}
.menu button:disabled { color: #8c8c8c; }
.menu .hot { background: #91c9f7; }
.menu hr {
  flex: 1 1 0;
  width: 82px;
  margin: 0 0 0 auto;
  border: 0;
  background: linear-gradient(#d2d2d2, #d2d2d2) center / 100% 1px no-repeat;
}
```
